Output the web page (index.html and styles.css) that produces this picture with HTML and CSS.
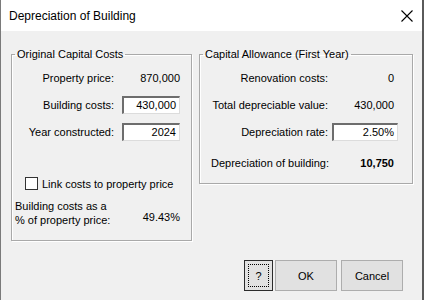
FILE: index.html
```html
<!DOCTYPE html>
<html lang="en">
<head>
  <meta charset="UTF-8">
  <title>Depreciation of Building</title>
  <link rel="stylesheet" href="styles.css">
</head>
<body>
  <div class="window">
    <div class="titlebar">
      <span class="title">Depreciation of Building</span>
      <svg class="close" width="12" height="12" viewBox="0 0 12 12">
        <path d="M0.5 0.5L11.5 11.5M11.5 0.5L0.5 11.5" stroke="#000" stroke-width="1.1" fill="none"/>
      </svg>
    </div>

    <div class="client">
      <div class="groups">
        <fieldset class="group group-original">
          <legend>Original Capital Costs</legend>
          <div class="fields">
            <span class="label">Property price:</span>
            <span class="value">870,000</span>
            <span class="label">Building costs:</span>
            <span class="input">430,000</span>
            <span class="label">Year constructed:</span>
            <span class="input">2024</span>
          </div>
          <label class="check"><span class="box"></span>Link costs to property price</label>
          <div class="ratio">
            <div class="ratio-label">Building costs as a<br>% of property price:</div>
            <div class="ratio-value">49.43%</div>
          </div>
        </fieldset>

        <fieldset class="group group-allowance">
          <legend>Capital Allowance (First Year)</legend>
          <div class="fields">
            <span class="label">Renovation costs:</span>
            <span class="value">0</span>
            <span class="label">Total depreciable value:</span>
            <span class="value">430,000</span>
            <span class="label">Depreciation rate:</span>
            <span class="input">2.50%</span>
            <span class="label label-left total">Depreciation of building:</span>
            <span class="value total strong">10,750</span>
          </div>
        </fieldset>
      </div>

      <div class="buttons">
        <button class="btn btn-help"><span class="focus">?</span></button>
        <button class="btn btn-ok">OK</button>
        <button class="btn btn-cancel">Cancel</button>
      </div>
    </div>
  </div>
</body>
</html>
```

FILE: styles.css
```css
body {
  margin: 0;
  font-family: "Liberation Sans", Arial, sans-serif;
  font-size: 11px;
  color: #000;
  background: #fff;
}
.window {
  width: 424px;
  height: 300px;
  box-sizing: border-box;
  border-left: 1px solid #7a7a7a;
  border-right: 2px solid #5a5a5a;
  display: flex;
  flex-direction: column;
}
.titlebar {
  height: 31px;
  flex: none;
  background: #fff;
  display: flex;
  align-items: center;
  padding: 0 9px 0 8px;
}
.title {
  font-size: 12px;
}
.close {
  margin-left: auto;
}
.client {
  flex: 1;
  background: #f0f0f0;
  padding: 17px 19px 0 10px;
}
.groups {
  display: flex;
  gap: 7px;
  align-items: flex-start;
}
.group {
  flex: none;
  min-width: 0;
  margin: 0;
  padding: 0;
  border: 1px solid #a9a9a9;
  box-shadow: 1px 1px 0 #fff, inset 1px 1px 0 #fff;
}
.group legend {
  margin-left: 3px;
  padding: 0 2px;
  line-height: 13px;
}
.group-original {
  width: 181px;
  height: 193px;
  box-sizing: border-box;
}
.group-allowance {
  width: 214px;
  height: 136px;
  box-sizing: border-box;
}
.fields {
  display: grid;
  grid-auto-rows: 18px;
  row-gap: 9px;
  align-items: center;
  padding-top: 8px;
  white-space: nowrap;
}
.group-original .fields {
  grid-template-columns: minmax(0, 1fr) 58px;
  column-gap: 8px;
  padding-right: 11px;
}
.group-allowance .fields {
  grid-template-columns: minmax(0, 1fr) 66px;
  column-gap: 4px;
  padding-right: 14px;
}
.label {
  text-align: right;
}
.label-left {
  text-align: left;
  padding-left: 11px;
}
.value {
  text-align: right;
}
.group-allowance .value {
  padding-right: 4px;
}
.total {
  margin-top: 8px;
}
.strong {
  font-weight: bold;
}
.input {
  box-sizing: border-box;
  height: 18px;
  line-height: 14px;
  background: #fff;
  border: 1px solid #dcdcdc;
  border-top: 2px solid #6d6d6d;
  border-left: 2px solid #6d6d6d;
  text-align: right;
  padding-right: 3px;
}
.check {
  display: flex;
  align-items: center;
  gap: 4px;
  margin: 36px 0 0 13px;
}
.box {
  width: 13px;
  height: 13px;
  box-sizing: border-box;
  border: 1px solid #333;
  background: #fff;
}
.ratio {
  display: flex;
  justify-content: space-between;
  align-items: flex-end;
  margin-top: 9px;
  padding: 0 11px 0 3px;
  line-height: 14px;
}
.ratio-value {
  margin-bottom: 3px;
}
.buttons {
  display: flex;
  justify-content: flex-end;
  margin-top: 19px;
}
.btn {
  height: 31px;
  box-sizing: border-box;
  background: #e1e1e1;
  border: 1px solid #adadad;
  font-family: inherit;
  font-size: 11px;
  color: #000;
  padding: 0;
}
.btn-help {
  width: 29px;
  margin-right: 2px;
  border: 1px solid #2b2b2b;
  padding: 3px;
}
.btn-help .focus {
  display: flex;
  align-items: center;
  justify-content: center;
  height: 100%;
  border: 1px dotted #000;
  box-sizing: border-box;
}
.btn-ok {
  width: 62px;
  margin-right: 4px;
}
.btn-cancel {
  width: 62px;
}
```
